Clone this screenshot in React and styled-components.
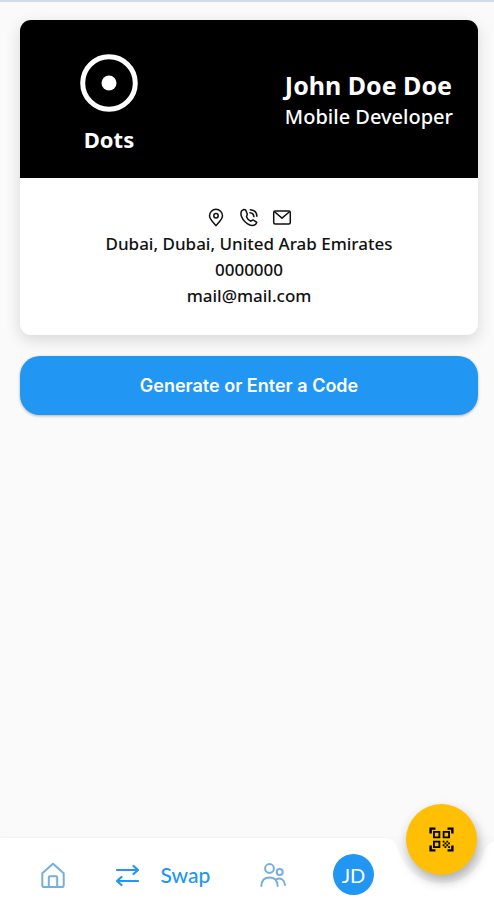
import styled, { createGlobalStyle } from 'styled-components';
import { MdQrCodeScanner } from 'react-icons/md';

const GlobalStyle = createGlobalStyle`
  * {
    box-sizing: border-box;
  }

  body {
    margin: 0;
    background: #fafafa;
    font-family: 'Noto Sans', 'Open Sans', sans-serif;
    color: #111111;
  }

  button {
    border: 0;
    padding: 0;
    font: inherit;
    cursor: pointer;
  }
`;

const Page = styled.div`
  display: flex;
  flex-direction: column;
  min-height: 100vh;
  border-top: 2px solid #cfdcec;
`;

const Content = styled.main`
  display: flex;
  flex: 1;
  flex-direction: column;
  gap: 21px;
  padding: 18px 16px 24px 20px;
`;

const Card = styled.article`
  border-radius: 11px;
  background: #ffffff;
  box-shadow: 0 5px 16px 0 rgba(0, 0, 0, 0.14);
  overflow: hidden;
`;

const CardHeader = styled.header`
  display: flex;
  align-items: center;
  justify-content: space-between;
  height: 158px;
  padding: 0 25px 0 60px;
  background: #000000;
  color: #ffffff;
`;

const Brand = styled.div`
  display: flex;
  flex-direction: column;
  align-items: center;
  gap: 11px;
  padding-top: 11px;
  font-size: 22px;
  font-weight: 700;
  line-height: 32px;
`;

const Owner = styled.div`
  display: flex;
  flex-direction: column;
  padding-top: 3px;
`;

const OwnerName = styled.h1`
  margin: 0;
  font-size: 25px;
  font-weight: 700;
  line-height: 32px;
`;

const OwnerRole = styled.p`
  margin: 0;
  font-size: 20px;
  font-weight: 500;
  line-height: 32px;
`;

const CardBody = styled.div`
  display: flex;
  flex-direction: column;
  align-items: center;
  padding: 27px 16px 26px;
`;

const ContactIcons = styled.div`
  display: flex;
  gap: 13px;
  height: 26px;
  align-items: center;
`;

const ContactLine = styled.p`
  margin: 0;
  font-size: 17px;
  font-weight: 500;
  line-height: 26px;
`;

const CodeButton = styled.button`
  height: 59px;
  border-radius: 20px;
  background: #2196f3;
  box-shadow: 0 1px 3px rgba(0, 0, 0, 0.3);
  color: #ffffff;

  && {
    font-family: 'Inter', sans-serif;
    font-size: 18px;
    font-weight: 600;
  }
`;

const BottomBar = styled.nav`
  position: sticky;
  bottom: 0;
  display: flex;
  align-items: center;
  justify-content: space-between;
  height: 62px;
  padding: 11px 120px 0 40px;
  background: #ffffff;
  box-shadow: 0 -1px 2px rgba(0, 0, 0, 0.04);
`;

const NavButton = styled.button`
  display: flex;
  align-items: center;
  gap: 21px;
  background: none;
  color: ${({ $active }) => ($active ? '#2196f3' : '#77aee0')};

  && {
    font-family: 'Lato', sans-serif;
    font-size: 21px;
    font-weight: 500;
  }
`;

const Avatar = styled.button`
  width: 41px;
  height: 41px;
  border-radius: 50%;
  background: #2196f3;
  color: #ffffff;

  && {
    font-family: 'Lato', sans-serif;
    font-size: 20px;
  }
`;

const Notch = styled.svg`
  position: absolute;
  top: -2px;
  right: 0;
`;

const ScanButton = styled.button`
  position: absolute;
  top: -34px;
  right: 17px;
  display: flex;
  align-items: center;
  justify-content: center;
  width: 71px;
  height: 71px;
  border-radius: 50%;
  background: #ffbf05;
  box-shadow: 2px 6px 12px rgba(0, 0, 0, 0.3);
  color: #000000;
`;

const LogoIcon = () => (
  <svg width="58" height="58" viewBox="0 0 58 58" aria-hidden="true">
    <circle cx="29" cy="29" r="26.3" fill="none" stroke="#fff" strokeWidth="5" />
    <circle cx="29" cy="29" r="7.5" fill="#fff" />
  </svg>
);

const PinIcon = () => (
  <svg width="20" height="20" viewBox="0 0 20 20" fill="none" stroke="#111" strokeWidth="1.5">
    <path d="M10 17.500C7.500 14.700 3.500 11.200 3.500 7.800a6.500 6.500 0 0 1 13 0c0 3.400-4 6.900-6.500 9.700z" />
    <circle cx="10" cy="7.700" r="2.200" />
  </svg>
);

const PhoneIcon = () => (
  <svg
    width="20"
    height="20"
    viewBox="0 0 20 20"
    fill="none"
    stroke="#111"
    strokeWidth="1.5"
    strokeLinecap="round"
    strokeLinejoin="round"
  >
    <path d="M4.600 1.500 2.600 2.900C.8 6.300 3 11.100 6 13.800c3.200 3 7.600 4.600 10.600 2.600l1.200-2.100-3.700-2.400-2.300 1.300c-2-.7-3.500-2.300-4.300-4.500L8.300 6 6.500 1.700z" />
    <path d="M11 4.700c2.200.2 3.700 1.700 3.900 3.900M11.300 1.700c3.800.2 6.400 2.900 6.600 6.600" />
  </svg>
);

const MailIcon = () => (
  <svg width="20" height="20" viewBox="0 0 20 20" fill="none" stroke="#111" strokeWidth="1.5">
    <rect x="1.700" y="3" width="16.600" height="13" rx="1.500" />
    <path d="m2.500 3.800 7.500 6.300 7.500-6.300" strokeLinejoin="round" />
  </svg>
);

const HomeIcon = () => (
  <svg
    width="26"
    height="28"
    viewBox="0 0 26 28"
    fill="none"
    stroke="currentColor"
    strokeWidth="2"
    strokeLinejoin="round"
  >
    <path d="M2.300 12.300 13 2.800l10.700 9.500v11.900a1.800 1.800 0 0 1-1.800 1.800H4.100a1.800 1.800 0 0 1-1.800-1.800z" />
    <path d="M8.800 26V16.200a1 1 0 0 1 1-1h6.400a1 1 0 0 1 1 1V26" />
  </svg>
);

const SwapIcon = () => (
  <svg
    width="26"
    height="24"
    viewBox="0 0 26 24"
    fill="none"
    stroke="currentColor"
    strokeWidth="2.2"
    strokeLinecap="round"
    strokeLinejoin="round"
  >
    <path d="M4 7h21M20.500 3l4.500 4-4.500 4M25 18H4M8.500 14 4 18l4.500 4" />
  </svg>
);

const PeopleIcon = () => (
  <svg
    width="28"
    height="26"
    viewBox="0 0 28 26"
    fill="none"
    stroke="currentColor"
    strokeWidth="2"
    strokeLinecap="round"
  >
    <circle cx="11.500" cy="6.500" r="4.400" />
    <circle cx="21.700" cy="10" r="3" />
    <path d="M3.300 24c.4-5.400 3.600-8.400 8.200-8.400s7.800 3 8.200 8.400M18.500 17.200c4.600-1.800 8 .6 8.500 5.800" />
  </svg>
);

function BusinessCard() {
  return (
    <Card>
      <CardHeader>
        <Brand>
          <LogoIcon />
          Dots
        </Brand>
        <Owner>
          <OwnerName>John Doe Doe</OwnerName>
          <OwnerRole>Mobile Developer</OwnerRole>
        </Owner>
      </CardHeader>
      <CardBody>
        <ContactIcons aria-hidden="true">
          <PinIcon />
          <PhoneIcon />
          <MailIcon />
        </ContactIcons>
        <ContactLine>Dubai, Dubai, United Arab Emirates</ContactLine>
        <ContactLine>0000000</ContactLine>
        <ContactLine>mail@mail.com</ContactLine>
      </CardBody>
    </Card>
  );
}

function Navigation() {
  return (
    <BottomBar aria-label="Main">
      <Notch width="112" height="50" viewBox="0 0 112 50" aria-hidden="true">
        <path
          d="M0 0v2C10 2 13 5 16 13c6 20 22 34 44 34s38-14 43-33c2-5 4-7 9-8V0z"
          fill="#f8f8f8"
        />
      </Notch>
      <NavButton aria-label="Home">
        <HomeIcon />
      </NavButton>
      <NavButton $active aria-current="page">
        <SwapIcon />
        Swap
      </NavButton>
      <NavButton aria-label="Contacts">
        <PeopleIcon />
      </NavButton>
      <Avatar>JD</Avatar>
      <ScanButton aria-label="Scan code">
        <MdQrCodeScanner size={29} />
      </ScanButton>
    </BottomBar>
  );
}

function App() {
  return (
    <Page>
      <GlobalStyle />
      <Content>
        <BusinessCard />
        <CodeButton>Generate or Enter a Code</CodeButton>
      </Content>
      <Navigation />
    </Page>
  );
}

export default App;
